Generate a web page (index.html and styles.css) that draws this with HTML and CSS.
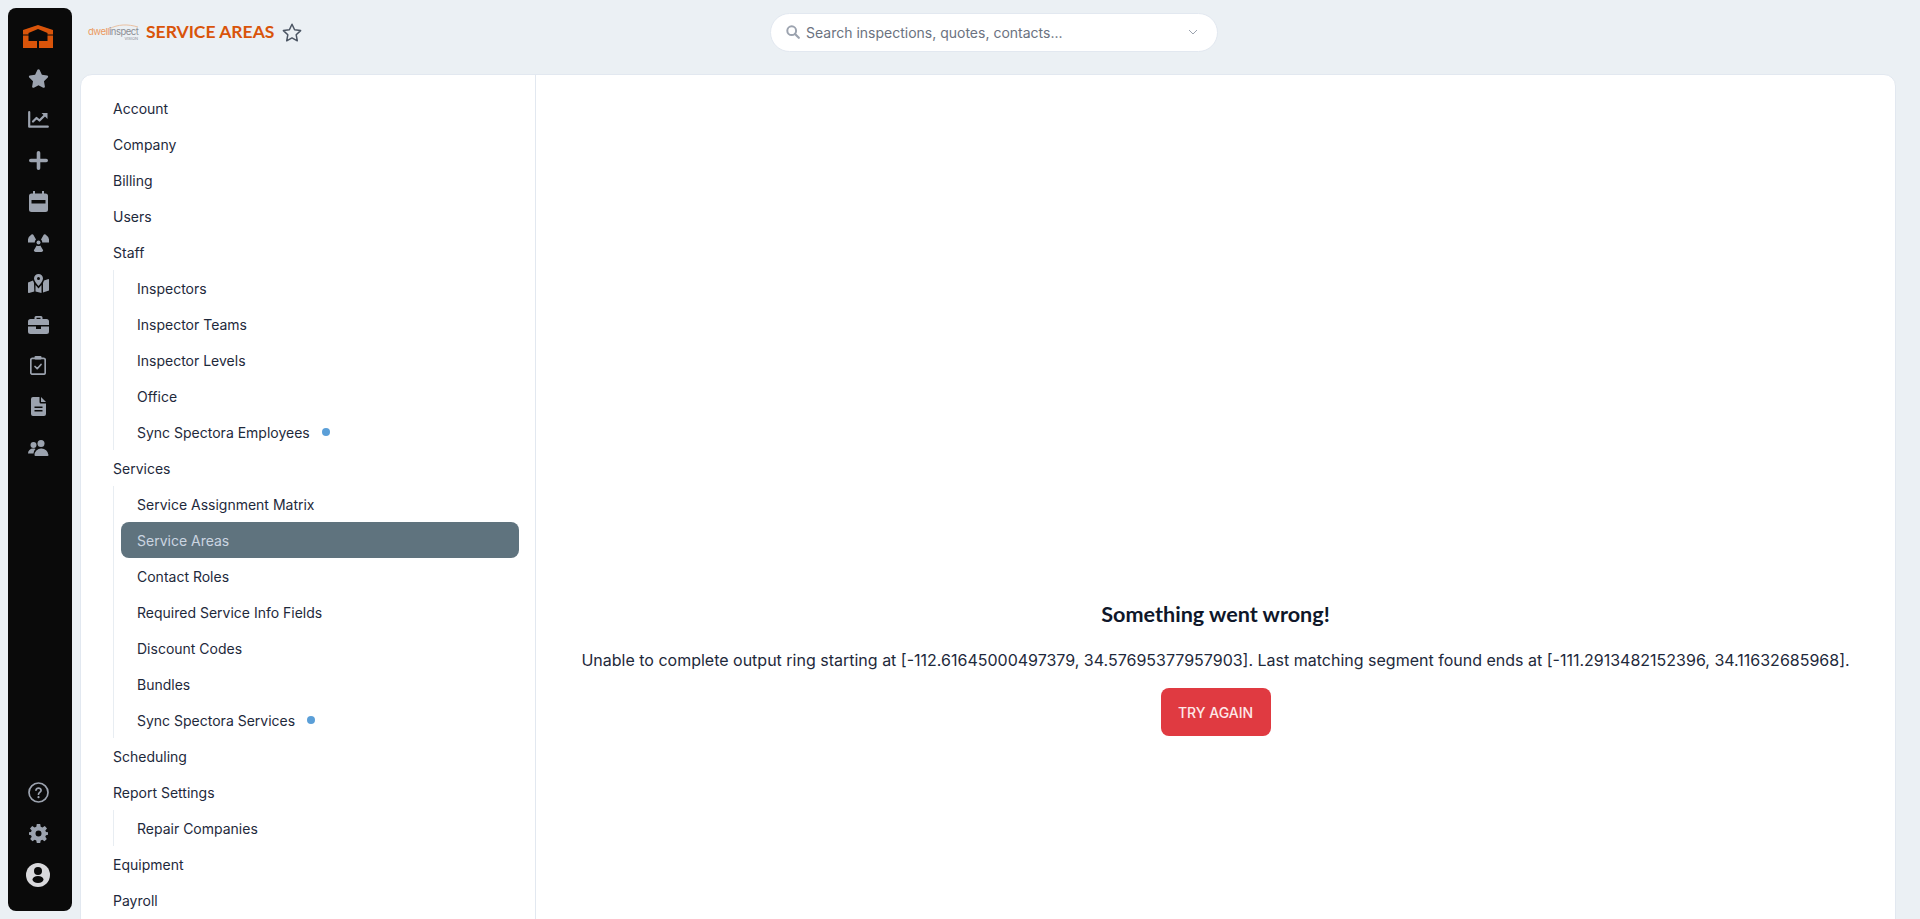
FILE: index.html
```html
<!DOCTYPE html>
<html lang="en">
<head>
<meta charset="utf-8">
<title>Service Areas</title>
<link rel="stylesheet" href="styles.css">
</head>
<body>
<aside class="rail">
  <div class="rail-logo">
    <svg width="30" height="23" viewBox="0 0 30 23"><path fill="#d9540a" d="M15 0 30 5V9.500H24.500V8L15 4 5.500 8V9.500H0V5ZM0 10.500H5.500V16H14V23H0ZM30 10.500H24.500V16H16V23H30Z"/></svg>
  </div>
  <nav class="rail-list">
    <a class="rail-item"><svg width="21" height="19" viewBox="0 0 576 512"><path d="M316.900 18C311.600 7 300.400 0 288.100 0s-23.400 7-28.800 18L195 150.300 51.400 171.500c-12 1.800-22 10.200-25.700 21.700s-.7 24.200 7.900 32.700L137.800 329 113.200 474.700c-2 12 3 24.200 12.900 31.300s23 8 33.800 2.300l128.300-68.500 128.300 68.500c10.800 5.700 23.900 4.900 33.800-2.300s14.900-19.300 12.900-31.300L438.500 329 542.700 225.900c8.600-8.500 11.700-21.200 7.900-32.700s-13.700-19.900-25.700-21.700L381.200 150.300 316.900 18z"/></svg></a>
    <a class="rail-item"><svg width="21" height="17" viewBox="0 0 21 17"><path class="ln" d="M1.200 1.200V15.700H19.800" stroke-width="2.400"/><path class="ln" d="M5 10.500 8.500 7 11.500 9.500 16.500 4.500"/><path d="M13.500 2H19.500V8Z"/></svg></a>
    <a class="rail-item"><svg width="19" height="19" viewBox="0 0 19 19"><path class="ln thick" d="M9.500 1.800V17.200M1.800 9.500H17.200"/></svg></a>
    <a class="rail-item"><svg width="19" height="21" viewBox="0 0 19 21"><path fill-rule="evenodd" d="M4 0H6V2.500H13V0H15V2.500H16.500A2.500 2.500 0 0 1 19 5V18.500A2.500 2.500 0 0 1 16.500 21H2.500A2.500 2.500 0 0 1 0 18.500V5A2.500 2.500 0 0 1 2.500 2.500H4ZM2.500 9V12.500H16.500V9Z"/></svg></a>
    <a class="rail-item"><svg width="21" height="19" viewBox="0 0 21 19"><circle cx="10.500" cy="9.500" r="2"/><path d="M0 9.500A8 8 0 0 1 3.500 1.500C4.300 1 5 1.200 5.300 1.800L8 6.500A3.500 3.500 0 0 0 6.800 9.500ZM21 9.500A8 8 0 0 0 17.500 1.500C16.700 1 16 1.200 15.700 1.800L13 6.500A3.500 3.500 0 0 1 14.200 9.500ZM8.700 12.500A3.500 3.500 0 0 0 12.300 12.500L15 17C15.300 17.600 15.100 18.200 14.500 18.500A8 8 0 0 1 6.500 18.500C5.900 18.200 5.700 17.600 6 17Z"/></svg></a>
    <a class="rail-item"><svg width="21" height="19" viewBox="0 0 21 19"><path fill-rule="evenodd" d="M10.500 0A4.500 4.500 0 0 1 15 4.500C15 6.500 12.500 9.800 10.500 12 8.500 9.800 6 6.500 6 4.500A4.500 4.500 0 0 1 10.500 0ZM10.500 3A1.500 1.500 0 1 0 10.500 6 1.500 1.500 0 0 0 10.500 3Z"/><path d="M0 8.500 5 6.500 6 9 6.300 17.500 1 19C.4 19 0 18.700 0 18ZM7.500 11 10.500 14.500 13.500 11V19L7.500 17.500ZM15 9 16 6.500 20.500 5C20.800 5 21 5.300 21 5.700V16.500L15 18.500Z"/></svg></a>
    <a class="rail-item"><svg width="21" height="18" viewBox="0 0 21 18"><path fill-rule="evenodd" d="M6.500 3V1.500A1.500 1.500 0 0 1 8 0H13A1.500 1.500 0 0 1 14.500 1.500V3H18.500A2.500 2.500 0 0 1 21 5.500V9H0V5.500A2.500 2.500 0 0 1 2.500 3ZM8.500 1.800V3H12.500V1.800Z"/><path d="M0 10.500H8V13H13V10.500H21V15.500A2.500 2.500 0 0 1 18.500 18H2.500A2.500 2.500 0 0 1 0 15.500Z"/></svg></a>
    <a class="rail-item"><svg width="16" height="19" viewBox="0 0 16 19"><rect class="ln slim" x=".8" y="2.300" width="14.400" height="15.900" rx="1.500"/><rect x="4.500" y="0" width="7" height="3.500" rx="1"/><path class="ln slim" d="M5 10.500 7.200 12.700 11 8.500"/></svg></a>
    <a class="rail-item"><svg width="15" height="19" viewBox="0 0 15 19"><path fill-rule="evenodd" d="M2 0H8.500V5A1.500 1.500 0 0 0 10 6.500H15V17A2 2 0 0 1 13 19H2A2 2 0 0 1 0 17V2A2 2 0 0 1 2 0ZM3.500 9.500V11H11.500V9.500ZM3.500 13V14.500H11.500V13Z"/><path d="M10 0 15 5H10Z"/></svg></a>
    <a class="rail-item"><svg width="21" height="16" viewBox="0 0 21 16"><circle cx="5.500" cy="5" r="3"/><circle cx="13" cy="3.500" r="3.500"/><path d="M0 13.500A5 5 0 0 1 5 8.500H6.500A4.500 4.500 0 0 1 7.500 9 6.500 6.500 0 0 0 5.500 13.500ZM6.500 15A6.500 6.500 0 0 1 13 8.500 7 7 0 0 1 20.500 15 1 1 0 0 1 19.500 16H7.500A1 1 0 0 1 6.500 15Z"/></svg></a>
  </nav>
  <nav class="rail-list rail-bottom">
    <a class="rail-item"><svg width="21" height="21" viewBox="0 0 21 21"><circle class="ln slim" cx="10.500" cy="10.500" r="9.500"/><path class="ln slim" d="M8 8.200A2.600 2.600 0 0 1 13.100 8.200C13.100 10.300 10.500 10.300 10.500 12.200"/><circle cx="10.500" cy="15.200" r="1.100"/></svg></a>
    <a class="rail-item"><svg width="19" height="19" viewBox="0 0 19 19"><path fill-rule="evenodd" d="M7.800 0H11.200L11.700 2.700 13.400 3.500 15.800 2 18 4.400 16.300 6.500 17 8 19 8.200V10.800L17 11.300 16.300 12.800 17.800 15 15.500 17.200 13.300 15.700 11.700 16.400 11.200 19H7.800L7.300 16.400 5.700 15.700 3.500 17.200 1.200 15 2.700 12.800 2 11.300 0 10.800V8.200L2 8 2.700 6.500 1 4.400 3.200 2 5.600 3.500 7.300 2.700ZM9.500 6.500A3 3 0 1 0 9.500 12.500 3 3 0 0 0 9.500 6.500Z"/></svg></a>
    <a class="rail-item rail-user"><svg width="24" height="24" viewBox="0 0 24 24"><circle cx="12" cy="12" r="12" fill="#d9d9dc"/><circle cx="12" cy="8" r="4" fill="#0a0a0a"/><ellipse cx="12" cy="16.500" rx="5.500" ry="3.500" fill="#0a0a0a"/></svg></a>
  </nav>
</aside>

<div class="page">
  <header class="topbar">
    <div class="title-group">
      <div class="brand">
        <svg class="brand-arc" width="50" height="8" viewBox="0 0 50 8"><path d="M21 6C30 1 40 1 50 4" fill="none" stroke="#e8b48c" stroke-width=".8"/></svg>
        <span class="brand-name"><span class="brand-dwell">dwell</span>inspect</span>
        <span class="brand-sub">VISION</span>
      </div>
      <h1 class="page-title">SERVICE AREAS</h1>
      <svg class="fav" width="20" height="19" viewBox="0 0 20 19"><path d="M10 1.300 12.600 6.800 18.600 7.600 14.200 11.800 15.300 17.800 10 14.900 4.700 17.800 5.800 11.800 1.400 7.600 7.400 6.800Z" fill="none" stroke="#4b5563" stroke-width="1.500" stroke-linejoin="round"/></svg>
    </div>
    <div class="search">
      <svg width="14" height="14" viewBox="0 0 14 14"><circle cx="5.700" cy="5.700" r="4.400" fill="none" stroke="#9ca3af" stroke-width="2"/><path d="M9 9 12.800 12.800" stroke="#9ca3af" stroke-width="2.200" stroke-linecap="round"/></svg>
      <span class="search-text">Search inspections, quotes, contacts...</span>
      <svg class="chev" width="10" height="6" viewBox="0 0 10 6"><path d="M1 1 5 5 9 1" fill="none" stroke="#9ca3af" stroke-width="1"/></svg>
    </div>
  </header>

  <main class="card">
    <nav class="settings">
      <a class="s-item">Account</a>
      <a class="s-item">Company</a>
      <a class="s-item">Billing</a>
      <a class="s-item">Users</a>
      <a class="s-item">Staff</a>
      <div class="s-group">
        <a class="s-item">Inspectors</a>
        <a class="s-item">Inspector Teams</a>
        <a class="s-item">Inspector Levels</a>
        <a class="s-item">Office</a>
        <a class="s-item">Sync Spectora Employees<i class="dot"></i></a>
      </div>
      <a class="s-item">Services</a>
      <div class="s-group">
        <a class="s-item">Service Assignment Matrix</a>
        <a class="s-item active">Service Areas</a>
        <a class="s-item">Contact Roles</a>
        <a class="s-item">Required Service Info Fields</a>
        <a class="s-item">Discount Codes</a>
        <a class="s-item">Bundles</a>
        <a class="s-item">Sync Spectora Services<i class="dot"></i></a>
      </div>
      <a class="s-item">Scheduling</a>
      <a class="s-item">Report Settings</a>
      <div class="s-group">
        <a class="s-item">Repair Companies</a>
      </div>
      <a class="s-item">Equipment</a>
      <a class="s-item">Payroll</a>
    </nav>
    <section class="error">
      <h2 class="error-title">Something went wrong!</h2>
      <p class="error-msg">Unable to complete output ring starting at [-112.61645000497379, 34.57695377957903]. Last matching segment found ends at [-111.2913482152396, 34.11632685968].</p>
      <button class="retry">TRY AGAIN</button>
    </section>
  </main>
</div>
</body>
</html>
```
FILE: styles.css
```css
* { box-sizing: border-box; }
html, body { margin: 0; height: 919px; overflow: hidden; }
body {
  display: flex;
  background: #ebf0f4;
  font-family: Inter, "Liberation Sans", sans-serif;
  color: #1e293b;
  font-size: 14px;
}
.rail {
  flex: none;
  width: 64px;
  height: 903px;
  margin: 8px 0 0 8px;
  background: #0a0a0a;
  border-radius: 8px;
  display: flex;
  flex-direction: column;
  padding: 0 4px 16px 0;
}
.rail-logo { height: 50px; padding-top: 17px; display: flex; justify-content: center; }
.rail-list { display: flex; flex-direction: column; }
.rail-bottom { margin-top: auto; }
.rail-item { height: 41px; display: flex; align-items: center; justify-content: center; }
.rail-item svg { fill: #9ca3af; }
.ln { fill: none; stroke: #9ca3af; stroke-width: 2.200; stroke-linecap: round; stroke-linejoin: round; }
.thick { stroke-width: 3.600; }
.slim { stroke-width: 1.700; }

.page { flex: 1; min-width: 0; padding-left: 8px; padding-right: 24px; }
.topbar {
  height: 64px;
  margin-bottom: 10px;
  display: grid;
  grid-template-columns: 690px 448px;
  align-items: center;
}
.title-group { display: flex; align-items: center; padding-left: 8px; }
.brand { position: relative; width: 50px; height: 22px; flex: none; }
.brand-arc { position: absolute; left: 0; top: 2px; }
.brand-name {
  position: absolute;
  left: 0;
  top: 5px;
  font-size: 9.500px;
  line-height: 12px;
  letter-spacing: -.5px;
  color: #8b8f94;
  white-space: nowrap;
}
.brand-dwell { color: #ec9a5e; }
.brand-sub {
  position: absolute;
  right: 0;
  top: 15px;
  font-size: 4px;
  line-height: 5px;
  color: #8b8f94;
}
.page-title {
  margin: 0 0 0 8px;
  font-family: Lato, sans-serif;
  font-size: 17.500px;
  font-weight: 700;
  line-height: 24px;
  color: #d9540a;
  white-space: nowrap;
}
.fav { margin-left: 8px; }
.search {
  height: 39px;
  background: #fff;
  border: 1px solid #e2e8f0;
  border-radius: 20px;
  display: flex;
  align-items: center;
  padding: 0 19px 0 15px;
  gap: 6px;
}
.search-text { flex: 1; color: #6b7280; font-size: 14px; }

.card {
  height: 1190px;
  background: #fff;
  border: 1px solid #e2e8f0;
  border-radius: 12px;
  display: flex;
}
.settings {
  flex: none;
  width: 455px;
  border-right: 1px solid #e2e8f0;
  padding: 15px 16px 0 32px;
}
.s-item {
  display: flex;
  align-items: center;
  height: 36px;
  white-space: nowrap;
}
.s-group { border-left: 1px solid #e8edf2; padding-left: 7px; }
.s-group .s-item { padding-left: 16px; }
.s-group .active {
  background: #5f737e;
  color: #cbd5e1;
  border-radius: 8px;
}
.dot {
  width: 8px;
  height: 8px;
  margin-left: 12px;
  border-radius: 50%;
  background: #5b9fd8;
}
.error {
  flex: 1;
  min-width: 0;
  padding-top: 524px;
  display: flex;
  flex-direction: column;
  align-items: center;
}
.error-title {
  margin: 0;
  font-family: Lato, sans-serif;
  font-size: 21.600px;
  font-weight: 700;
  line-height: 30px;
  color: #0f172a;
}
.error-msg { margin: 19px 0 16px; font-size: 16px; line-height: 24px; color: #1e293b; white-space: nowrap; }
.retry {
  width: 110px;
  height: 48px;
  border: 0;
  border-radius: 8px;
  background: #e03a41;
  color: #fde8e8;
  font: 500 14px Inter, sans-serif;
}
```
